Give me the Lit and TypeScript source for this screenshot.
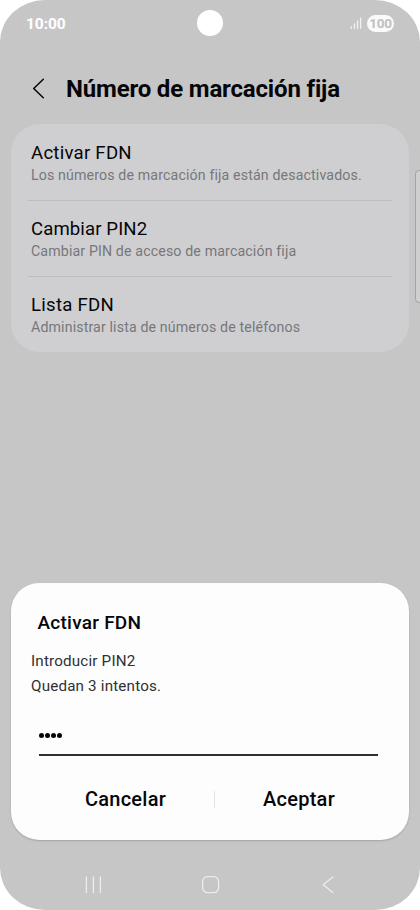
import { LitElement, html, css } from "lit";
import { customElement } from "lit/decorators.js";

const ITEMS = [
  { title: "Activar FDN", sub: "Los números de marcación fija están desactivados." },
  { title: "Cambiar PIN2", sub: "Cambiar PIN de acceso de marcación fija" },
  { title: "Lista FDN", sub: "Administrar lista de números de teléfonos" },
];

@customElement("app-root")
export class AppRoot extends LitElement {
  static styles = css`
    :host { display: block; width: 420px; height: 910px; background: #fff; font-family: Roboto, "Liberation Sans", sans-serif; color: #060608; }
    * { box-sizing: border-box; }
    svg { display: block; }
    .phone { position: relative; width: 420px; height: 910px; border-radius: 45px / 42px; background: #c6c6c6; overflow: hidden; display: flex; flex-direction: column; white-space: nowrap; }
    .status { height: 46px; flex: none; display: grid; grid-template-columns: 1fr 26px 1fr; align-items: center; padding: 0 26px; color: #fff; }
    .clock { font-size: 15.5px; line-height: 18px; font-weight: 700; padding-top: 1px; letter-spacing: -0.05px; }
    .camera { width: 26px; height: 26px; border-radius: 50%; background: #fff; }
    .indicators { display: flex; justify-content: flex-end; align-items: center; gap: 5px; }
    .battery { width: 27px; height: 17px; border-radius: 9px; background: #fafafa; color: #c0c0c0; font-size: 13.5px; line-height: 17px; font-weight: 700; text-align: center; letter-spacing: -0.3px; }
    .header { height: 77.5px; flex: none; display: flex; align-items: center; padding: 8px 0 0 32px; gap: 20px; }
    h1 { margin: 0; font-size: 24px; line-height: 28px; font-weight: 700; letter-spacing: -0.17px; }
    .card { margin: 0 11px; height: 228px; flex: none; border-radius: 29px; background: #cfcfd1; padding: 1.5px 17px 0; }
    .row { height: 76px; padding: 16px 3px 0; border-bottom: 1px solid #bdbdbf; }
    .row:last-child { border-bottom: 0; }
    .title { font-size: 18.6px; line-height: 24px; letter-spacing: 0.25px; }
    .row:nth-child(2) .title { letter-spacing: 0.1px; }
    .sub { font-size: 14.2px; line-height: 20px; color: #77777a; letter-spacing: 0.13px; }
    .space { flex: 1; }
    .dialog { margin: 0 11px; height: 257px; flex: none; border-radius: 28px; background: #fdfdfe; box-shadow: 0 1px 2px rgba(0,0,0,.18); padding: 27px 20px 0; display: flex; flex-direction: column; }
    h2 { margin: 0 0 0 6.5px; font-size: 19px; line-height: 26px; font-weight: 500; letter-spacing: 0.25px; }
    .message { margin-top: 13px; font-size: 15.2px; line-height: 24.5px; color: #303033; letter-spacing: 0.18px; }
    .field { margin: 23px 11px 0 7.5px; height: 35px; border-bottom: 2px solid #303034; padding: 12px 0 0 0.5px; display: flex; gap: 1px; }
    .dot { width: 5px; height: 5px; border-radius: 50%; background: #060608; }
    .actions { margin: 31px 6px 0 -6px; height: 24px; display: grid; grid-template-columns: 189px 1px 1fr; align-items: center; text-align: center; font-size: 20px; line-height: 24px; font-weight: 500; letter-spacing: 0.25px; }
    .cancel { padding-left: 12px; }
    .rule { width: 1px; height: 17px; background: #e6e6e8; }
    .nav { height: 70px; flex: none; padding: 35px 82px 0 84px; display: flex; justify-content: space-between; }
    .edge { position: absolute; left: 415px; top: 170px; width: 12px; height: 133px; border: 1px solid #a3a3a3; border-radius: 4px; background: #cfcfcf; }
  `;

  render() {
    return html`<div class="phone">
      <div class="status">
        <span class="clock">10:00</span><span class="camera"></span>
        <div class="indicators">
          <svg width="12" height="12" viewBox="0 0 12 12" fill="none" stroke="#f2f2f2" stroke-width="1.3"><path d="M1.3 9.3V11.8M4.4 6.5V11.8M7.5 3.4V11.8M10.6 .5V11.8" /></svg>
          <span class="battery">100</span>
        </div>
      </div>
      <div class="header">
        <svg width="14" height="22" viewBox="0 0 14 22" fill="none" stroke="#060608" stroke-width="1.5" stroke-linecap="round" stroke-linejoin="round"><path d="M11.3 1.2L1.7 10.5L11.3 19.7" /></svg>
        <h1>Número de marcación fija</h1>
      </div>
      <div class="card">
        ${ITEMS.map((i) => html`<div class="row"><div class="title">${i.title}</div><div class="sub">${i.sub}</div></div>`)}
      </div>
      <div class="space"></div>
      <div class="dialog">
        <h2>Activar FDN</h2>
        <div class="message"><div>Introducir PIN2</div><div>Quedan 3 intentos.</div></div>
        <div class="field">${[0, 1, 2, 3].map(() => html`<span class="dot"></span>`)}</div>
        <div class="actions"><span class="cancel">Cancelar</span><span class="rule"></span><span class="accept">Aceptar</span></div>
      </div>
      <div class="nav">
        <svg width="20" height="20" viewBox="0 0 20 20" fill="none" stroke="#ececec" stroke-width="1.3"><path d="M2.4 1.5V18M9.4 1.5V18M16.4 1.5V18" /></svg>
        <svg width="20" height="20" viewBox="0 0 20 20" fill="none" stroke="#ececec" stroke-width="1.3"><rect x="1.6" y="1.7" width="16" height="16" rx="5" /></svg>
        <svg width="20" height="20" viewBox="0 0 20 20" fill="none" stroke="#ececec" stroke-width="1.3"><path d="M15.4 1.5L5.2 9.8L15.4 18" /></svg>
      </div>
      <div class="edge"></div>
    </div>`;
  }
}
